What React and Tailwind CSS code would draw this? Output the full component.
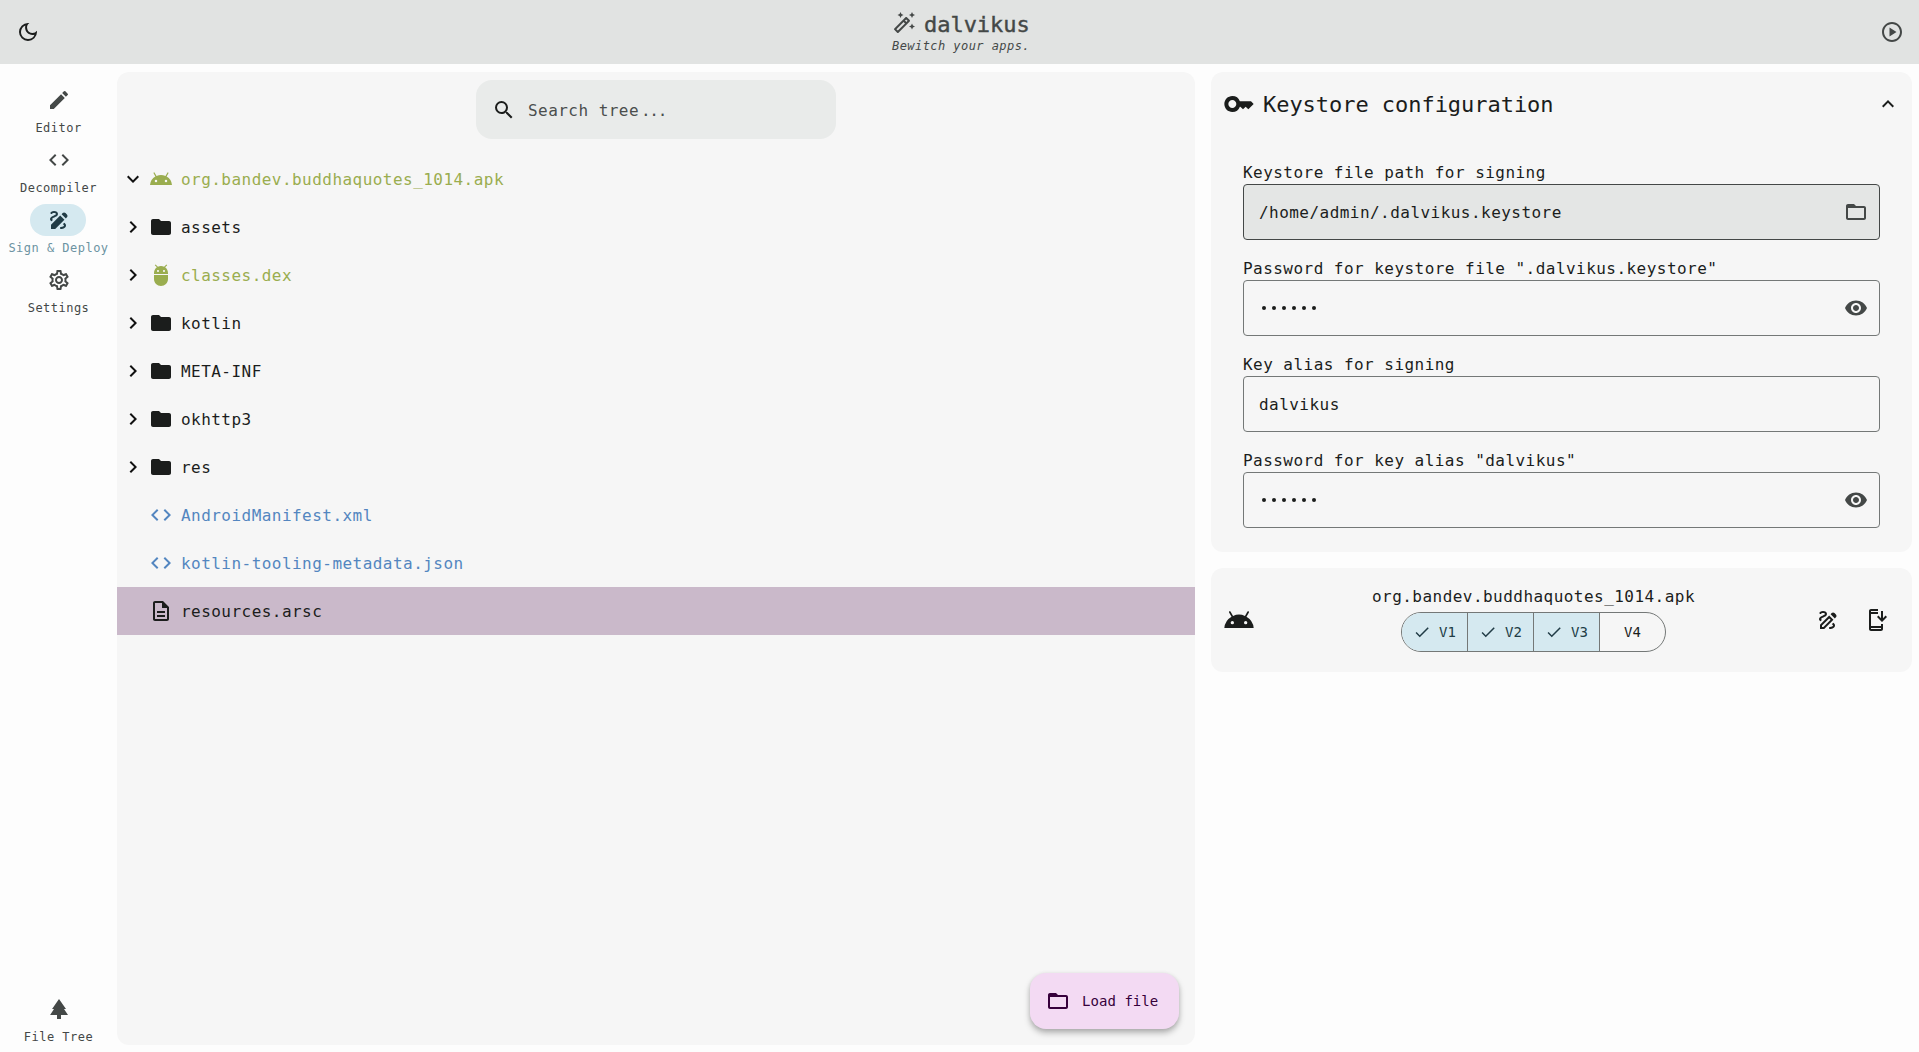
import React from "react";
import {
  MdOutlineDarkMode, MdOutlinePlayCircle, MdOutlineAutoFixHigh, MdEdit, MdCode, MdDraw, MdOutlineDraw,
  MdOutlineSettings, MdPark, MdSearch, MdExpandMore, MdExpandLess, MdChevronRight, MdAndroid, MdAdb,
  MdFolder, MdFolderOpen, MdOutlineDescription, MdKey, MdVisibility, MdCheck, MdOutlineInstallMobile,
} from "react-icons/md";

const NAV = [
  { label: "Editor", Icon: MdEdit },
  { label: "Decompiler", Icon: MdCode },
  { label: "Sign & Deploy", Icon: MdDraw, active: true },
  { label: "Settings", Icon: MdOutlineSettings },
];

const TREE = [
  { name: "org.bandev.buddhaquotes_1014.apk", Icon: MdAndroid, Arrow: MdExpandMore, color: "text-[#9aad4f]" },
  { name: "assets", Icon: MdFolder, Arrow: MdChevronRight },
  { name: "classes.dex", Icon: MdAdb, Arrow: MdChevronRight, color: "text-[#9aad4f]" },
  { name: "kotlin", Icon: MdFolder, Arrow: MdChevronRight },
  { name: "META-INF", Icon: MdFolder, Arrow: MdChevronRight },
  { name: "okhttp3", Icon: MdFolder, Arrow: MdChevronRight },
  { name: "res", Icon: MdFolder, Arrow: MdChevronRight },
  { name: "AndroidManifest.xml", Icon: MdCode, color: "text-[#5386c0]" },
  { name: "kotlin-tooling-metadata.json", Icon: MdCode, color: "text-[#5386c0]" },
  { name: "resources.arsc", Icon: MdOutlineDescription, selected: true },
];

const FIELDS = [
  { label: "Keystore file path for signing", value: "/home/admin/.dalvikus.keystore", Icon: MdFolderOpen, filled: true },
  { label: 'Password for keystore file ".dalvikus.keystore"', secret: 6, Icon: MdVisibility },
  { label: "Key alias for signing", value: "dalvikus" },
  { label: 'Password for key alias "dalvikus"', secret: 6, Icon: MdVisibility },
];

function NavItem({ label, Icon, active }) {
  return (
    <div className="flex h-[60px] flex-col items-center">
      <div className={`flex h-8 w-14 items-center justify-center rounded-full ${active ? "bg-[#d5e9f0] text-[#213c46]" : "text-[#444847]"}`}>
        <Icon className="ml-px size-6" />
      </div>
      <span className={`mt-1 pl-px text-[12px] leading-4 tracking-[0.48px] whitespace-nowrap ${active ? "text-[#6c93a2]" : "text-[#444847]"}`}>{label}</span>
    </div>
  );
}

function TreeRow({ name, Icon, Arrow, color, selected }) {
  return (
    <div className={`flex h-12 items-center pl-1 ${selected ? "bg-[#cab9ca]" : ""}`}>
      <div className="mr-1 size-6 text-[#111]">{Arrow && <Arrow className="size-6" />}</div>
      <div className={`flex items-center ${color || "text-[#1b1d1c]"}`}>
        <Icon className="mr-2 size-6" />
        <span className="pt-0.5">{name}</span>
      </div>
    </div>
  );
}

function Field({ label, value, secret, Icon, filled }) {
  return (
    <div>
      <div className="h-6 pt-px leading-6">{label}</div>
      <div className={`flex h-14 items-center rounded border pr-[11px] pl-[15px] ${filled ? "border-[#444847] bg-[#e4e6e5]" : "border-[#747877]"}`}>
        {secret ? (
          <div className="flex flex-1 gap-[6.1px] pl-[3px]">
            {Array.from({ length: secret }, (_, i) => (
              <span key={i} className="size-1 rounded-full bg-[#1b1d1c]" />
            ))}
          </div>
        ) : (
          <span className="flex-1 pt-0.5">{value}</span>
        )}
        {Icon && <Icon className="size-6 text-[#444847]" />}
      </div>
    </div>
  );
}

export default function App() {
  return (
    <div className="flex h-[1052px] w-[1919px] flex-col overflow-hidden bg-[#fdfdfd] font-['DejaVu_Sans_Mono',monospace] text-[16px] leading-6 tracking-[0.46px] text-[#1b1d1c]">
      <header className="flex h-16 shrink-0 items-center justify-between bg-[#e1e3e2] px-4">
        <MdOutlineDarkMode className="size-6 text-[#1b1d1c]" />
        <div className="flex flex-col pl-0.5 text-[#444847]">
          <div className="flex items-center">
            <MdOutlineAutoFixHigh className="-mt-1 mr-2 size-6" />
            <span className="text-[22px] leading-7 font-medium tracking-[-0.04px] [-webkit-text-stroke:0.4px_currentColor]">dalvikus</span>
          </div>
          <span className="-mt-px -mb-px text-[12px] leading-4 tracking-[0.44px] italic">Bewitch your apps.</span>
        </div>
        <MdOutlinePlayCircle className="-mr-px size-6 text-[#444847]" />
      </header>

      <div className="flex min-h-0 flex-1 pt-2 pr-[7px] pb-[7px]">
        <nav className="flex w-[117px] flex-col pt-3 pr-px">
          {NAV.map((n) => (
            <NavItem key={n.label} {...n} />
          ))}
          <div className="mt-auto -mb-2">
            <NavItem label="File Tree" Icon={MdPark} />
          </div>
        </nav>

        <main className="relative flex w-[1078px] flex-col rounded-xl bg-[#f6f6f6] pt-2">
          <div className="mx-auto flex h-[59px] w-[360px] items-center rounded-2xl bg-[#e9ebea] pl-4">
            <MdSearch className="mr-3 size-6" />
            <span className="pt-0.5 text-[#4b4e4d]">
              Search tree<span className="ml-[2px] tracking-[-1.3px]">...</span>
            </span>
          </div>
          <div className="mt-4">
            {TREE.map((t) => (
              <TreeRow key={t.name} {...t} />
            ))}
          </div>
          <button className="absolute right-4 bottom-4 flex h-14 w-[149px] items-center rounded-2xl bg-[#f3daf3] pl-4 text-[14px] leading-5 tracking-[0.05px] text-[#36003b] shadow-[0_4px_6px_rgba(0,0,0,0.26),0_1px_4px_rgba(0,0,0,0.1)]">
            <MdFolderOpen className="mr-3 size-6" />
            Load file
          </button>
        </main>

        <aside className="ml-4 flex flex-1 flex-col gap-4">
          <section className="h-[480px] rounded-xl bg-[#f6f6f6]">
            <div className="flex h-16 items-center pr-3 pl-3">
              <MdKey className="mr-2 size-8" />
              <h2 className="pt-0.5 text-[22px] leading-7 tracking-[-0.04px]">Keystore configuration</h2>
              <MdExpandLess className="ml-auto size-6" />
            </div>
            <div className="flex flex-col gap-4 px-8 pt-6">
              {FIELDS.map((f) => (
                <Field key={f.label} {...f} />
              ))}
            </div>
          </section>

          <section className="flex h-[104px] items-center rounded-xl bg-[#f6f6f6] pr-3 pl-3">
            <MdAndroid className="size-8" />
            <div className="mb-1 ml-2 flex flex-1 flex-col items-center">
              <span className="h-6 pt-px leading-6">org.bandev.buddhaquotes_1014.apk</span>
              <div className="mt-1 flex h-10 overflow-hidden rounded-full border border-[#747877] text-[14px] tracking-normal">
                {["V1", "V2", "V3"].map((v) => (
                  <div key={v} className="flex w-[66px] items-center justify-center border-r border-[#747877] bg-[#d5e9f0] text-[#213c46]">
                    <MdCheck className="mr-2 size-[18px]" />
                    {v}
                  </div>
                ))}
                <div className="flex w-[65px] items-center justify-center">V4</div>
              </div>
            </div>
            <div className="flex">
              <div className="flex size-12 items-center justify-center">
                <MdOutlineDraw className="size-6" />
              </div>
              <div className="flex size-12 items-center justify-center">
                <MdOutlineInstallMobile className="size-6" />
              </div>
            </div>
          </section>
        </aside>
      </div>
    </div>
  );
}
